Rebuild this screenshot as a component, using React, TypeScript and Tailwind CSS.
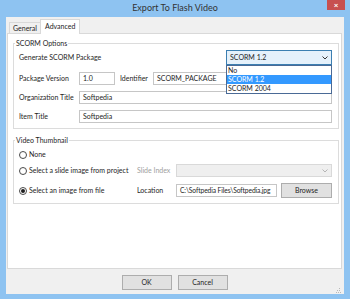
import React from "react";

const Chevron = ({ color = "#4d4d4d" }: { color?: string }) => (
  <svg width="6" height="4" viewBox="0 0 6 4">
    <polyline points="0.5,0.5 3,3 5.5,0.5" fill="none" stroke={color} strokeWidth="1" />
  </svg>
);

const TextBox = ({ value, className = "" }: { value: string; className?: string }) => (
  <div
    className={`h-[13px] border border-[#c6c6c6] bg-white px-[3px] leading-[11px] text-[#1e1e1e] whitespace-nowrap overflow-hidden ${className}`}
  >
    {value}
  </div>
);

const Radio = ({ checked, label }: { checked?: boolean; label: string }) => (
  <div className="flex items-center gap-[2px]">
    <div className="w-[8px] h-[8px] rounded-full border border-[#4a4a4a] bg-white flex items-center justify-center">
      {checked && <div className="w-[4px] h-[4px] rounded-full bg-[#1e1e1e]" />}
    </div>
    <span>{label}</span>
  </div>
);

const Button = ({ label, className = "" }: { label: string; className?: string }) => (
  <div
    className={`h-[15px] border border-[#adadad] bg-[#e1e1e1] flex items-center justify-center text-[7px] text-[#1e1e1e] ${className}`}
  >
    {label}
  </div>
);

export default function App() {
  return (
    <div className="w-[350px] h-[299px] bg-[#8ec3f1] flex flex-col font-[Lato,'Liberation_Sans',sans-serif] text-[7px] text-[#1e1e1e]">
      {/* title bar */}
      <div className="h-[17px] grid grid-cols-[1fr_auto_1fr]">
        <div />
        <span className="text-[9px] leading-[16px] text-[#333]">Export To Flash Video</span>
        <div className="flex justify-end pr-[5px]">
          <div className="w-[18px] h-[10px] bg-[#c75050] flex items-center justify-center text-white text-[8px] leading-none font-bold">
            ×
          </div>
        </div>
      </div>

      {/* client area */}
      <div className="flex-1 mx-[6px] mb-[5px] bg-[#f0f0f0] flex flex-col pl-[1px] pr-[2px] pt-[2px]">
        {/* tabs */}
        <div className="flex items-end pl-[2px] -mb-px relative z-10">
          <div className="h-[11px] mb-px px-[3px] border-t border-l border-[#d9d9d9] bg-[#f0f0f0] leading-[11px]">
            General
          </div>
          <div className="h-[15px] px-[4px] border-t border-x border-[#d9d9d9] bg-white leading-[12px]">
            Advanced
          </div>
        </div>

        {/* tab panel */}
        <div className="h-[236px] border border-[#d9d9d9] bg-white pt-[4px] pl-[5px]">
          <fieldset className="w-[326px] border border-[#dcdcdc] pb-[5px]">
            <legend className="ml-[1px] px-[1px] leading-[10px]">SCORM Options</legend>
            <div className="flex flex-col pt-[2px] pl-[5px] pr-[6px]">
              <div className="h-[15px] flex items-center">
                <span className="flex-1">Generate SCORM Package</span>
                <div className="relative w-[106px] h-[15px] border border-[#3c7fb1] bg-[#e5f1fb] flex items-center justify-between px-[3px]">
                  <span>SCORM 1.2</span>
                  <Chevron color="#333" />
                  <div className="absolute left-[-1px] top-[14px] w-[106px] border border-[#4a6a96] bg-white flex flex-col z-20">
                    <span className="h-[9px] leading-[9px] px-[1px]">No</span>
                    <span className="h-[9px] leading-[9px] px-[1px] bg-[#3399ff] text-white">SCORM 1.2</span>
                    <span className="h-[9px] leading-[9px] px-[1px]">SCORM 2004</span>
                  </div>
                </div>
              </div>
              <div className="h-[13px] mt-[7px] flex items-center">
                <span className="w-[60px]">Package Version</span>
                <TextBox value="1.0" className="w-[36px]" />
                <span className="w-[33px] ml-[5px]">Identifier</span>
                <TextBox value="SCORM_PACKAGE" className="flex-1" />
              </div>
              <div className="h-[13px] mt-[6px] flex items-center">
                <span className="w-[60px]">Organization Title</span>
                <TextBox value="Softpedia" className="flex-1" />
              </div>
              <div className="h-[13px] mt-[6px] flex items-center">
                <span className="w-[60px]">Item Title</span>
                <TextBox value="Softpedia" className="flex-1" />
              </div>
            </div>
          </fieldset>

          <fieldset className="w-[326px] mt-[6px] border border-[#dcdcdc] pb-[5px]">
            <legend className="ml-[1px] px-[1px] leading-[10px]">Video Thumbnail</legend>
            <div className="flex flex-col pt-[3px] pl-[5px] pr-[6px]">
              <div className="h-[13px] flex items-center">
                <Radio label="None" />
              </div>
              <div className="h-[13px] mt-[3px] flex items-center">
                <div className="w-[118px]">
                  <Radio label="Select a slide image from project" />
                </div>
                <span className="w-[39px] text-[#a0a0a0]">Slide Index</span>
                <div className="flex-1 h-[13px] border border-[#d9d9d9] bg-[#efefef] flex items-center justify-end px-[3px]">
                  <Chevron color="#b5b5b5" />
                </div>
              </div>
              <div className="h-[15px] mt-[6px] flex items-center">
                <div className="w-[118px]">
                  <Radio checked label="Select an image from file" />
                </div>
                <span className="w-[39px]">Location</span>
                <TextBox
                  value="C:\Softpedia Files\Softpedia.jpg"
                  className="w-[101px] px-[2px] text-[6.7px] tracking-[-0.1px]"
                />
                <Button label="Browse" className="flex-1 ml-[4px]" />
              </div>
            </div>
          </fieldset>
        </div>

        {/* buttons */}
        <div className="flex-1 relative flex items-center justify-center gap-[6px] pt-px">
          <Button label="OK" className="w-[50px]" />
          <Button label="Cancel" className="w-[50px]" />
          <svg className="absolute right-[1px] bottom-[1px]" width="5" height="5" viewBox="0 0 5 5">
            <rect x="3" y="0" width="1" height="1" fill="#b8b8b8" />
            <rect x="1" y="2" width="1" height="1" fill="#b8b8b8" />
            <rect x="3" y="2" width="1" height="1" fill="#b8b8b8" />
            <rect x="0" y="4" width="1" height="1" fill="#b8b8b8" />
            <rect x="2" y="4" width="1" height="1" fill="#b8b8b8" />
            <rect x="4" y="4" width="1" height="1" fill="#b8b8b8" />
          </svg>
        </div>
      </div>
    </div>
  );
}
